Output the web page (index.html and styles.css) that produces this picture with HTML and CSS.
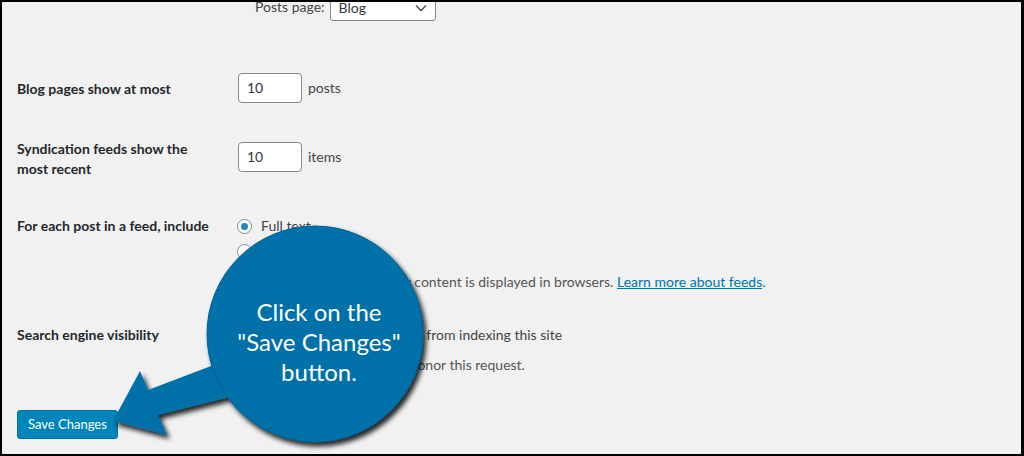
FILE: index.html
```html
<!DOCTYPE html>
<html lang="en">
<head>
<meta charset="utf-8">
<title>Reading Settings</title>
<link rel="stylesheet" href="styles.css">
</head>
<body>
<div class="frame">
  <div class="content">
    <div class="row-posts">
      <span class="sub-label">Posts page:</span>
      <div class="select"><span>Blog</span>
        <svg class="chev" width="12" height="8" viewBox="0 0 12 8"><path d="M1 1.5 L6 6.5 L11 1.5" fill="none" stroke="#555d66" stroke-width="1.6"/></svg>
      </div>
    </div>

    <div class="row row1">
      <div class="th">Blog pages show at most</div>
      <div class="td"><span class="input">10</span><span class="unit">posts</span></div>
    </div>

    <div class="row row2">
      <div class="th">Syndication feeds show the most recent</div>
      <div class="td"><span class="input">10</span><span class="unit">items</span></div>
    </div>

    <div class="row row3">
      <div class="th">For each post in a feed, include</div>
      <div class="td">
        <div class="opt"><span class="radio checked"></span>Full text</div>
        <div class="opt"><span class="radio"></span>Summary</div>
        <p class="desc">Your theme determines how content is displayed in browsers. <a href="#">Learn more about feeds</a>.</p>
      </div>
    </div>

    <div class="row row4">
      <div class="th">Search engine visibility</div>
      <div class="td">
        <div class="opt"><span class="check"></span>Discourage search engines from indexing this site</div>
        <p class="desc desc2">It is up to search engines to honor this request.</p>
      </div>
    </div>

    <div class="submit"><span class="button">Save Changes</span></div>
  </div>

  <svg class="callout" width="1024" height="456" viewBox="0 0 1024 456">
    <defs>
      <filter id="sh" x="-20%" y="-20%" width="150%" height="150%">
        <feDropShadow dx="3" dy="4" stdDeviation="2.5" flood-color="#000" flood-opacity="0.85"/>
      </filter>
    </defs>
    <g filter="url(#sh)">
      <polygon points="113,421 140,371 148,390 240,355 250,392 158,415 167,435" fill="#0071a8"/>
      <circle cx="315" cy="334" r="108" fill="#0071a8" stroke="#005f8e" stroke-width="1"/>
    </g>
    <text class="ctext" x="319" y="321" text-anchor="middle">Click on the</text>
    <text class="ctext" x="319" y="351" text-anchor="middle">"Save Changes"</text>
    <text class="ctext" x="319" y="381" text-anchor="middle">button.</text>
  </svg>
</div>
</body>
</html>
```

FILE: styles.css
```css
* { box-sizing: border-box; }
html, body { margin: 0; padding: 0; background: #000; }
body { width: 1024px; height: 456px; overflow: hidden; }

.frame {
  position: relative;
  width: 1024px;
  height: 456px;
  border-top: 2px solid #000;
  border-left: 2px solid #000;
  border-right: 3px solid #000;
  border-bottom: 2px solid #000;
  background: #f1f1f1;
  overflow: hidden;
  font-family: "Lato", "Noto Sans", sans-serif;
  font-size: 14px;
  color: #444;
}

.content { padding-left: 15px; }

.row-posts {
  display: flex;
  align-items: center;
  margin-top: -9px;
  margin-left: 221px;
  height: 28px;
}
.sub-label { margin-left: 17px; margin-right: 5px; color: #444; line-height: 20px; }
.select {
  width: 106px;
  height: 28px;
  background: #fff;
  border: 1px solid #7e8993;
  border-radius: 3px;
  display: flex;
  align-items: center;
  justify-content: space-between;
  padding: 0 8px 0 8px;
  color: #32373c;
}
.chev { margin-top: 1px; }

.row {
  display: grid;
  grid-template-columns: 221px 1fr;
  align-items: start;
}
.th {
  font-weight: bold;
  color: #23282d;
  line-height: 20px;
  width: 200px;
}
.td { line-height: 20px; color: #444; }

.row1 { margin-top: 52px; }
.row1 .th { margin-top: 6px; }
.row1 .td, .row2 .td { display: flex; align-items: center; }

.row2 { margin-top: 36px; }
.row2 .td { margin-top: 3px; }

.input {
  display: inline-block;
  width: 64px;
  height: 30px;
  line-height: 28px;
  padding: 0 8px;
  background: #fff;
  border: 1px solid #7e8993;
  border-radius: 4px;
  color: #32373c;
}
.unit { margin-left: 6px; }

.row3 { margin-top: 37px; }
.opt { display: flex; align-items: center; height: 20px; margin-bottom: 5px; color: #444; }
.radio {
  width: 15px;
  height: 15px;
  border-radius: 50%;
  border: 1px solid #7e8993;
  background: #fff;
  margin-right: 9px;
  margin-left: -1px;
  position: relative;
  flex: none;
}
.radio.checked::after {
  content: "";
  position: absolute;
  left: 3px; top: 3px;
  width: 7px; height: 7px;
  border-radius: 50%;
  background: #1e8cbe;
}
.check {
  width: 16px; height: 16px;
  border: 1px solid #7e8993;
  background: #fff;
  border-radius: 3px;
  margin-right: 6px;
  flex: none;
}
.desc { margin: 11px 0 0; line-height: 20px; color: #555; }
.desc a { color: #0073aa; text-decoration: underline; }

.row4 { margin-top: 33px; }
.desc2 { margin-top: 10px; }

.submit { margin-top: 35px; }
.button {
  display: inline-block;
  height: 29px;
  line-height: 27px;
  padding: 0 10px;
  background: #0085ba;
  border: 1px solid #0073aa;
  border-radius: 3px;
  color: #fff;
  font-size: 13px;
}

.callout { position: absolute; left: -2px; top: -2px; }
.ctext { font-family: "Lato", "Open Sans", sans-serif; font-size: 24px; fill: #fff; }
```
